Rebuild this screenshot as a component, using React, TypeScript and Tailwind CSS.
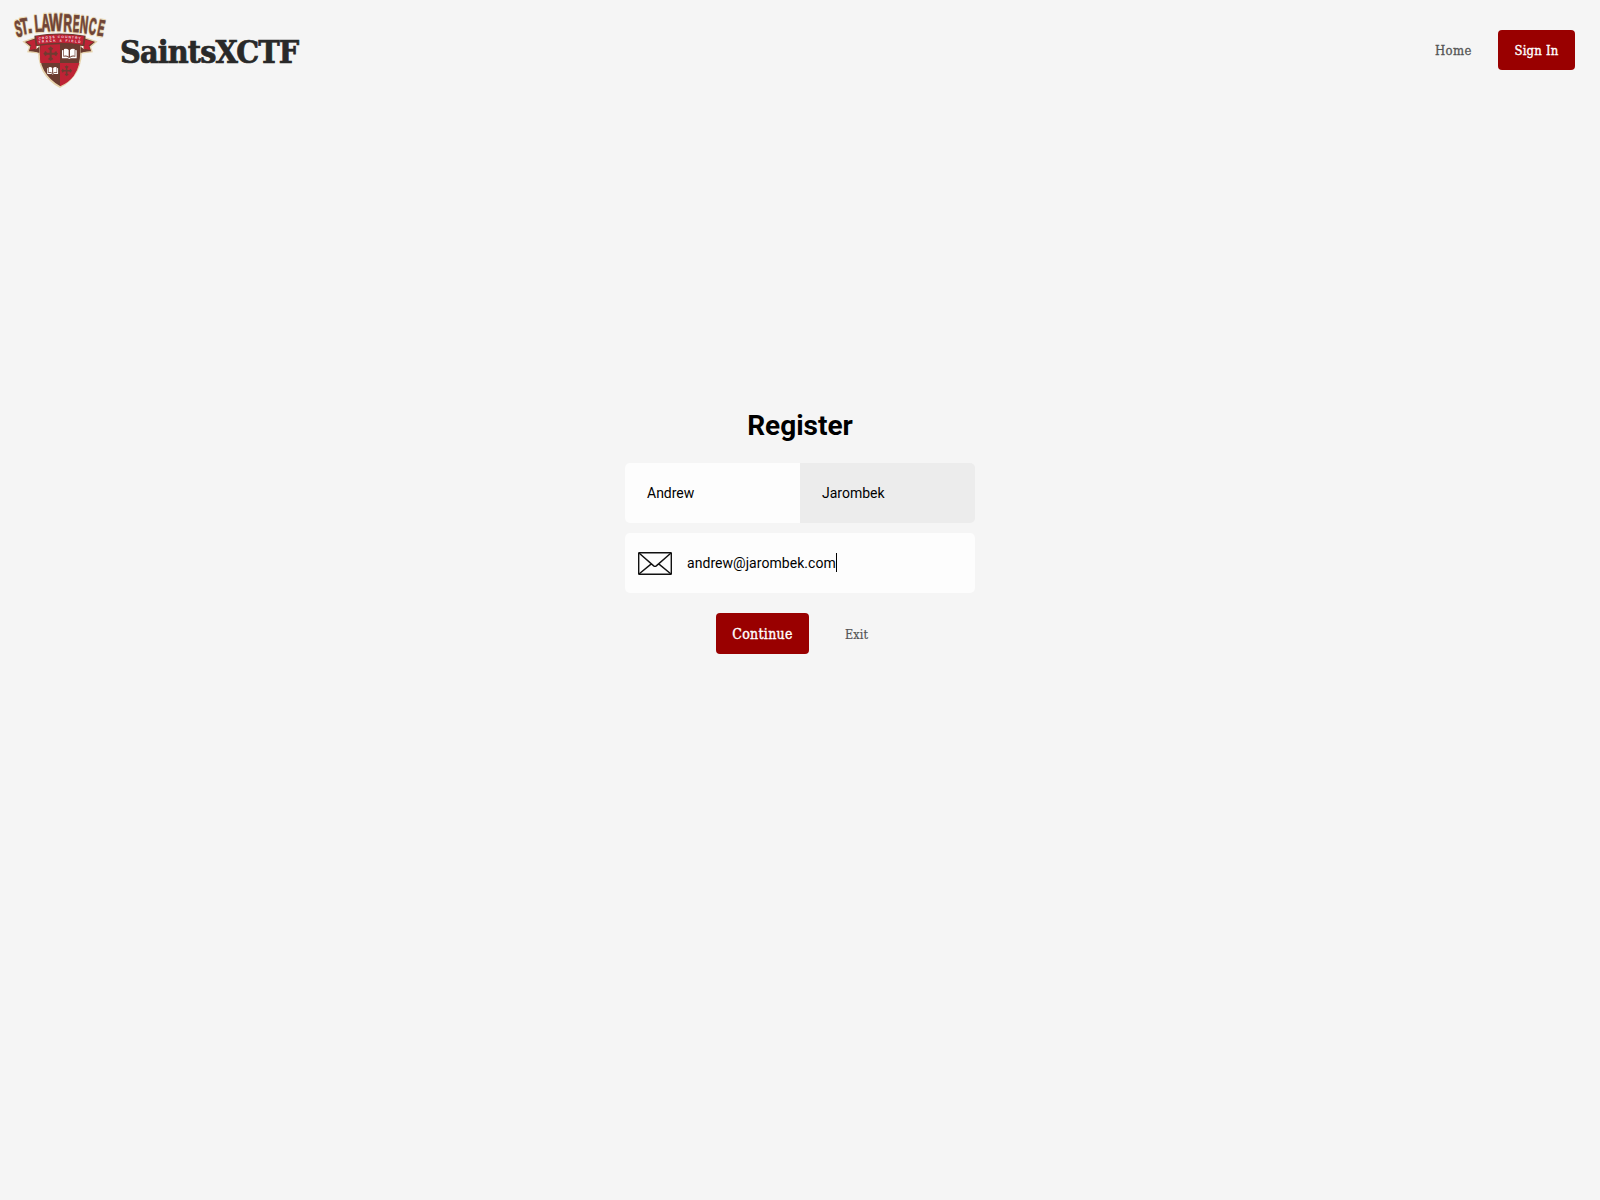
const letters: [string, number, number, number, number, number][] = [
  // glyph, centre x, baseline y, width, height, rotation
  ['S', 60, 109, 20, 47, -12],
  ['T', 77, 102, 22, 47, -9],
  ['.', 92, 98, 14, 48, -6],
  ['L', 117, 95, 22, 49, -5],
  ['A', 138, 94, 26, 51, -3],
  ['W', 168, 93, 40, 51, -1],
  ['R', 203, 94, 26, 50, 1],
  ['E', 227, 96, 19, 50, 4],
  ['N', 250, 99, 24, 50, 6],
  ['C', 275, 103, 22, 48, 8],
  ['E', 299, 107, 20, 47, 11],
];
const advance: Record<string, number> = { S: 66.7, T: 61, '.': 27.8, L: 61, A: 72.2, W: 94.4, R: 72.2, E: 66.7, N: 72.2, C: 72.2 };

function Letters({ outline }: { outline?: boolean }) {
  return (
    <g fontFamily="Liberation Sans" fontWeight="700" fontSize="100" textAnchor="middle" fill={outline ? '#ead9b5' : '#6f4436'} stroke={outline ? '#ead9b5' : '#6f4436'} strokeWidth={outline ? 2.5 : 0.6} strokeLinejoin="round">
      {letters.map(([c, x, y, w, h, r], i) => (
        <text key={i} vectorEffect="non-scaling-stroke" transform={`translate(${x} ${y}) rotate(${r}) scale(${w / advance[c]} ${h / 69})`}>{c}</text>
      ))}
    </g>
  );
}

function Book({ x, y, s }: { x: number; y: number; s: number }) {
  return (
    <g transform={`translate(${x} ${y}) scale(${s})`}>
      <path d="M-22-10l4-1v20q10-2 16 3h4q6-5 16-3v-20l4 1v24h-18l-4 2-4-2h-18z" fill="#fff" />
      <path d="M-16-14q9-3 14 3v20q-6-5-14-3zM16-14q-9-3-14 3v20q6-5 14-3z" fill="#fff" />
    </g>
  );
}

function Cross({ x, y, s }: { x: number; y: number; s: number }) {
  return (
    <g transform={`translate(${x} ${y}) scale(${s})`} fill="#6f3b31">
      <path d="M-3-15h6v12h12v6h-12v12h-6v-12h-12v-6h12z" />
      <path d="M0-22l4 4 4 1-3 5H-5l-3-5 4-1zM0 22l4-4 4-1-3-5H-5l-3 5 4 1zM-22 0l4-4 1-4 5 3v10l-5 3-1-4zM22 0l-4-4-1-4-5 3v10l5 3 1-4z" />
    </g>
  );
}

function Logo() {
  return (
    <svg viewBox="0 0 360 300" className="h-[100px] w-[120px] shrink-0">
      <path d="M117 128Q113 183 130 213Q147 243 180 261Q213 243 230 213Q247 183 243 128z" fill="#6b3b30" stroke="#e6d3ac" strokeWidth="5" />
      <path d="M122 132h58v57h-59q-3-28 1-57zM180 189h58q-5 22-17 39-15 20-41 31z" fill="#be2335" />
      <path d="M71 125l38-13v34l3 12-28-3 5-15zM289 125l-38-13v34l-3 12 28-3-5-15z" stroke="#e6d3ac" strokeWidth="4" fill="#6b3b30" />
      <path d="M79 126l30-9v29l-20 4 5-14zM281 126l-30-9v29l20 4-5-14z" fill="#be2335" />
      <path d="M100 153l18-13v19zM260 153l-18-13v19z" fill="#6b3b30" />
      <Letters outline />
      <path d="M103 107Q180 94 257 107L253 139Q180 126 107 139z" fill="#6b3b30" />
      <path d="M108 109Q180 98 252 109L248 134Q180 123 112 134z" fill="#be2335" />
      <Letters />
      <g fontFamily="Liberation Sans" fontWeight="700" fontSize="10" fill="#f6dfe0">
        <path id="banner-top" d="M116 119Q180 109 245 119" fill="none" />
        <path id="banner-bottom" d="M116 130Q180 120 245 130" fill="none" />
        <text textLength="126"><textPath href="#banner-top">CROSS COUNTRY</textPath></text>
        <text textLength="126"><textPath href="#banner-bottom">TRACK &amp; FIELD</textPath></text>
      </g>
      <Cross x={152} y={161} s={1} />
      <Cross x={200} y={212} s={0.75} />
      <Book x={208} y={161} s={1} />
      <Book x={158} y={212} s={0.74} />
    </svg>
  );
}

function Envelope() {
  return (
    <svg viewBox="0 0 34 23" className="h-[23px] w-[34px]" fill="none" stroke="#111" strokeWidth="1.4" strokeLinejoin="round">
      <rect x=".7" y=".7" width="32.6" height="21.6" rx=".5" />
      <path d="M1 1l14.7 12.9q1.3 1 2.6 0L33 1M1 22l12.6-10.4M33 22l-12.6-10.4" />
    </svg>
  );
}

const slab = "font-['Roboto_Slab','DejaVu_Serif_Condensed','DejaVu_Serif',serif]";

export default function App() {
  return (
    <div className="flex h-[1200px] w-[1600px] flex-col overflow-hidden bg-[#f5f5f5] font-[Roboto,sans-serif] text-black">
      <header className={`flex h-[100px] items-center ${slab}`}>
        <Logo />
        <h1 className="mt-[3px] text-[32px] leading-10 font-bold tracking-[-0.9px] text-[#292929] [-webkit-text-stroke:0.7px_#292929]">SaintsXCTF</h1>
        <nav className="mr-[25px] ml-auto flex items-center">
          <a className="mt-px mr-[25px] w-[38px] text-[13px] tracking-[0.4px] whitespace-nowrap text-[#555] [-webkit-text-stroke:0.3px_#555]">Home</a>
          <button className="h-10 w-[77px] rounded bg-[#990000] pt-px text-[13px] tracking-[0.2px] whitespace-nowrap text-white [-webkit-text-stroke:0.35px_white]">Sign In</button>
        </nav>
      </header>
      <main className="mx-auto flex w-[350px] flex-col pt-[306px]">
        <h2 className="h-[57px] text-center text-[28px] leading-10 font-bold">Register</h2>
        <div className="flex h-[60px] overflow-hidden rounded-[5px] text-[14px]">
          <div className="flex w-1/2 items-center bg-[#fdfdfd] pl-[22px]">Andrew</div>
          <div className="flex w-1/2 items-center bg-[#ececec] pl-[22px]">Jarombek</div>
        </div>
        <div className="mt-[10px] flex h-[60px] items-center rounded-[5px] bg-[#fdfdfd] pl-[13px] text-[14px]">
          <Envelope />
          <span className="ml-[15px] tracking-[0.05px]">andrew@jarombek.com</span>
          <span className="-mt-px h-[19px] w-px bg-black" />
        </div>
        <div className={`mt-5 ml-[91px] flex items-center ${slab}`}>
          <button className="h-[41px] w-[93px] rounded bg-[#990000] pt-px text-[14px] tracking-[0.3px] text-white [-webkit-text-stroke:0.35px_white]">Continue</button>
          <a className="mt-[3px] ml-[36px] text-[12.5px] tracking-[0.1px] text-[#555] [-webkit-text-stroke:0.2px_#555]">Exit</a>
        </div>
      </main>
    </div>
  );
}
